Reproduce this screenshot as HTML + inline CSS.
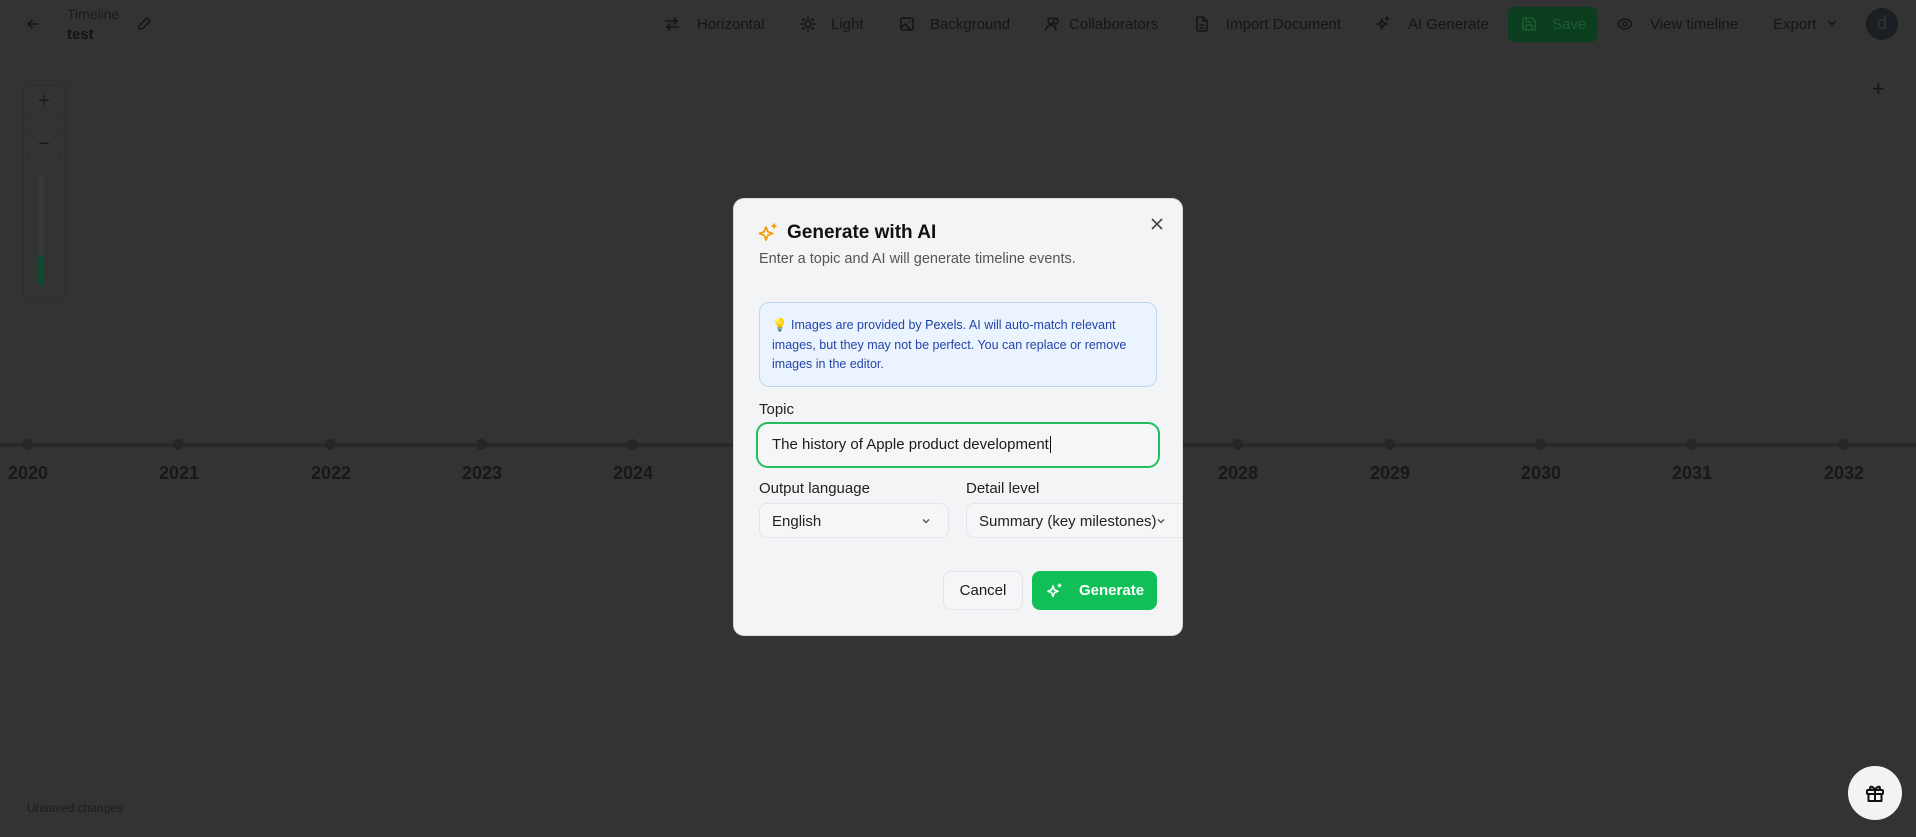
<!DOCTYPE html>
<html><head><meta charset="utf-8"><style>
*{box-sizing:border-box;margin:0;padding:0}
body{width:1916px;height:837px;background:#333333;font-family:"Liberation Sans",sans-serif;position:relative;overflow:hidden;color:#161616}
.a{position:absolute}
.tb{font-size:15px;color:#151515;white-space:nowrap}
.ic{position:absolute;width:16px;height:16px;stroke:#151515;fill:none;stroke-width:1.6;stroke-linecap:round;stroke-linejoin:round}
.yr{position:absolute;top:463px;font-size:18px;font-weight:bold;color:#181818;width:80px;text-align:center}
.dot{position:absolute;top:439px;width:11px;height:11px;border-radius:50%;background:#262626}
.m{position:absolute;left:734px;top:199px;width:448px;height:436px;background:#f3f4f6;border-radius:10px;overflow:hidden;box-shadow:0 0 0 1px #d8d8d8}
.m .a{white-space:nowrap}
.sel{position:absolute;top:304px;height:35px;border:1px solid #e3e5e8;border-radius:8px;background:#f5f6f8;font-size:15px;color:#222;padding:9px 12px}
</style></head><body>
<!-- top bar -->
<svg class="ic" style="left:25px;top:16px" viewBox="0 0 16 16"><path d="M13 8H3M7 4L3 8l4 4"/></svg>
<div class="a" style="left:67px;top:6px;font-size:14px;color:#1c1c1c">Timeline</div>
<div class="a" style="left:67px;top:26px;font-size:15px;font-weight:bold;color:#141414">test</div>
<svg class="ic" style="left:136px;top:16px" viewBox="0 0 16 16"><path d="M11 2l3 3-8 8H3v-3z"/></svg>

<svg class="ic" style="left:664px;top:16px" viewBox="0 0 16 16"><path d="M2 5h11M10 2l3 3-3 3M14 11H3M6 8l-3 3 3 3"/></svg>
<div class="a tb" style="left:697px;top:16px">Horizontal</div>
<svg class="ic" style="left:800px;top:16px" viewBox="0 0 16 16"><circle cx="8" cy="8" r="3"/><path d="M8 1v2M8 13v2M1 8h2M13 8h2M3 3l1.4 1.4M11.6 11.6L13 13M3 13l1.4-1.4M11.6 4.4L13 3"/></svg>
<div class="a tb" style="left:831px;top:16px">Light</div>
<svg class="ic" style="left:899px;top:16px" viewBox="0 0 16 16"><rect x="2" y="2" width="12" height="12" rx="1.5"/><path d="M2 12l4-4 6 6M10 6h.01"/></svg>
<div class="a tb" style="left:930px;top:16px">Background</div>
<svg class="ic" style="left:1044px;top:16px" viewBox="0 0 16 16"><circle cx="7" cy="5" r="3"/><path d="M2 14c0-3 2-5 5-5s5 2 5 5M11 2a3 3 0 010 6"/></svg>
<div class="a tb" style="left:1069px;top:16px">Collaborators</div>
<svg class="ic" style="left:1194px;top:16px" viewBox="0 0 16 16"><path d="M9 1H4a1 1 0 00-1 1v12a1 1 0 001 1h8a1 1 0 001-1V5zM9 1v4h4M6 9h4M6 12h4"/></svg>
<div class="a tb" style="left:1226px;top:16px">Import Document</div>
<svg class="ic" style="left:1375px;top:16px" viewBox="0 0 16 16"><path d="M7 3l1.3 3.7L12 8l-3.7 1.3L7 13l-1.3-3.7L2 8l3.7-1.3zM12 1v3M10.5 2.5h3"/></svg>
<div class="a tb" style="left:1408px;top:16px">AI Generate</div>
<div class="a" style="left:1508px;top:7px;width:89px;height:35px;background:#0b3d1f;border-radius:6px"></div>
<svg class="ic" style="left:1521px;top:16px;stroke:#1f5a33" viewBox="0 0 16 16"><path d="M3 2h8l3 3v9H2V2zM5 2v4h5M5 14v-5h6v5"/></svg>
<div class="a tb" style="left:1552px;top:16px;color:#1f5a33">Save</div>
<svg class="ic" style="left:1617px;top:16px" viewBox="0 0 16 16"><path d="M1 8s2.5-5 7-5 7 5 7 5-2.5 5-7 5-7-5-7-5z"/><circle cx="8" cy="8" r="2"/></svg>
<div class="a tb" style="left:1650px;top:16px">View timeline</div>
<div class="a tb" style="left:1773px;top:16px">Export</div>
<svg class="ic" style="left:1826px;top:17px;width:12px;height:12px" viewBox="0 0 12 12"><path d="M3 4.5l3 3 3-3"/></svg>
<div class="a" style="left:1866px;top:8px;width:32px;height:32px;border-radius:50%;background:#1b1f23;color:#333;font-size:18px;text-align:center;line-height:31px">d</div>

<!-- zoom panel -->
<div class="a" style="left:23px;top:80px;width:43px;height:220px;border:1px solid #2e2e2e;border-radius:6px"></div>
<div class="a" style="left:27px;top:84px;width:34px;height:34px;border:1px solid #2f2f2f;border-radius:5px;font-size:20px;text-align:center;line-height:32px;color:#1a1a1a">+</div>
<div class="a" style="left:27px;top:128px;width:34px;height:34px;border:1px solid #2f2f2f;border-radius:5px;font-size:20px;text-align:center;line-height:30px;color:#1a1a1a">−</div>
<div class="a" style="left:38px;top:175px;width:6px;height:110px;background:#363a39;border-radius:3px"></div>
<div class="a" style="left:38px;top:255px;width:6px;height:30px;background:#0d4a30;border-radius:3px"></div>
<div class="a" style="left:1872px;top:76px;font-size:22px;color:#151515">+</div>

<!-- timeline -->
<div class="a" style="left:0;top:443px;width:1916px;height:4px;background:#292929"></div>
<div class="dot" style="left:22px"></div><div class="yr" style="left:-12px">2020</div>
<div class="dot" style="left:173px"></div><div class="yr" style="left:139px">2021</div>
<div class="dot" style="left:325px"></div><div class="yr" style="left:291px">2022</div>
<div class="dot" style="left:476px"></div><div class="yr" style="left:442px">2023</div>
<div class="dot" style="left:627px"></div><div class="yr" style="left:593px">2024</div>
<div class="dot" style="left:1232px"></div><div class="yr" style="left:1198px">2028</div>
<div class="dot" style="left:1384px"></div><div class="yr" style="left:1350px">2029</div>
<div class="dot" style="left:1535px"></div><div class="yr" style="left:1501px">2030</div>
<div class="dot" style="left:1686px"></div><div class="yr" style="left:1652px">2031</div>
<div class="dot" style="left:1838px"></div><div class="yr" style="left:1804px">2032</div>

<div class="a" style="left:27px;top:801px;font-size:12px;color:#1c1c1c">Unsaved changes</div>
<div class="a" style="left:1848px;top:766px;width:54px;height:54px;border-radius:50%;background:#f2f3f5"></div>
<svg class="ic" style="left:1864px;top:782px;width:22px;height:22px;stroke:#111;stroke-width:2" viewBox="0 0 22 22"><rect x="3" y="8" width="16" height="4" rx="1"/><path d="M4.5 12v7h13v-7M11 8v11M11 8C9 4 6 4 6 6s3 2 5 2c2 0 5 0 5-2s-3-2-5 2"/></svg>

<!-- modal -->
<div class="m">
<svg class="a" style="left:24px;top:23px;width:21px;height:21px" viewBox="0 0 21 21" fill="none" stroke="#f59e0b" stroke-width="1.8" stroke-linejoin="round"><path d="M8 5l1.8 4.7L14.5 11.5l-4.7 1.8L8 18l-1.8-4.7L1.5 11.5l4.7-1.8z"/><path d="M16 1.5v5M13.5 4h5"/></svg>
<div class="a" style="left:53px;top:23px;font-size:19px;font-weight:bold;color:#111">Generate with AI</div>
<div class="a" style="left:25px;top:52px;font-size:14.5px;color:#555">Enter a topic and AI will generate timeline events.</div>
<svg class="a" style="left:417px;top:19px;width:12px;height:12px" viewBox="0 0 12 12" stroke="#444" stroke-width="1.6"><path d="M1 1l10 10M11 1L1 11"/></svg>
<div class="a" style="left:25px;top:103px;width:398px;height:85px;background:#eaf3fe;border:1px solid #bcd6f2;border-radius:10px"></div>
<div class="a" style="left:38px;top:117px;font-size:12.5px;line-height:19.5px;color:#2545a8;white-space:normal;width:380px">💡 Images are provided by <span style="color:#1a3a9c">Pexels</span>. AI will auto-match relevant images, but they may not be perfect. You can replace or remove images in the editor.</div>
<div class="a" style="left:25px;top:202px;font-size:15px;font-weight:500;color:#222">Topic</div>
<div class="a" style="left:22px;top:223px;width:404px;height:46px;border:2.5px solid #22c05a;border-radius:12px;background:#f4f6f7"></div>
<div class="a" style="left:38px;top:237px;font-size:15px;color:#1b1b1b">The history of Apple product development<span style="border-left:1px solid #111;margin-left:1px"></span></div>
<div class="a" style="left:25px;top:281px;font-size:15px;font-weight:500;color:#222">Output language</div>
<div class="a" style="left:232px;top:281px;font-size:15px;font-weight:500;color:#222">Detail level</div>
<div class="sel" style="left:25px;width:190px">English</div>
<svg class="a" style="left:186px;top:316px;width:12px;height:12px" viewBox="0 0 12 12" fill="none" stroke="#555" stroke-width="1.4"><path d="M3 4.5l3 3 3-3"/></svg>
<div class="sel" style="left:232px;width:240px">Summary (key milestones)</div>
<svg class="a" style="left:421px;top:316px;width:12px;height:12px" viewBox="0 0 12 12" fill="none" stroke="#555" stroke-width="1.4"><path d="M3 4.5l3 3 3-3"/></svg>
<div class="a" style="left:209px;top:372px;width:80px;height:39px;border:1px solid #e2e4e7;border-radius:8px;background:#f5f6f8;font-size:15px;font-weight:500;color:#1b1b1b;text-align:center;line-height:37px">Cancel</div>
<div class="a" style="left:298px;top:372px;width:125px;height:39px;border-radius:8px;background:#11bf57"></div>
<svg class="a" style="left:312px;top:383px;width:18px;height:18px" viewBox="0 0 18 18" fill="none" stroke="#fff" stroke-width="1.6" stroke-linejoin="round"><path d="M7 4l1.4 3.8L12 9.2l-3.6 1.4L7 14.5l-1.4-3.9L2 9.2l3.6-1.4z"/><path d="M13.5 1.5v4M11.5 3.5h4"/></svg>
<div class="a" style="left:345px;top:383px;font-size:15px;font-weight:bold;color:#fff">Generate</div>
</div>
</body></html>
